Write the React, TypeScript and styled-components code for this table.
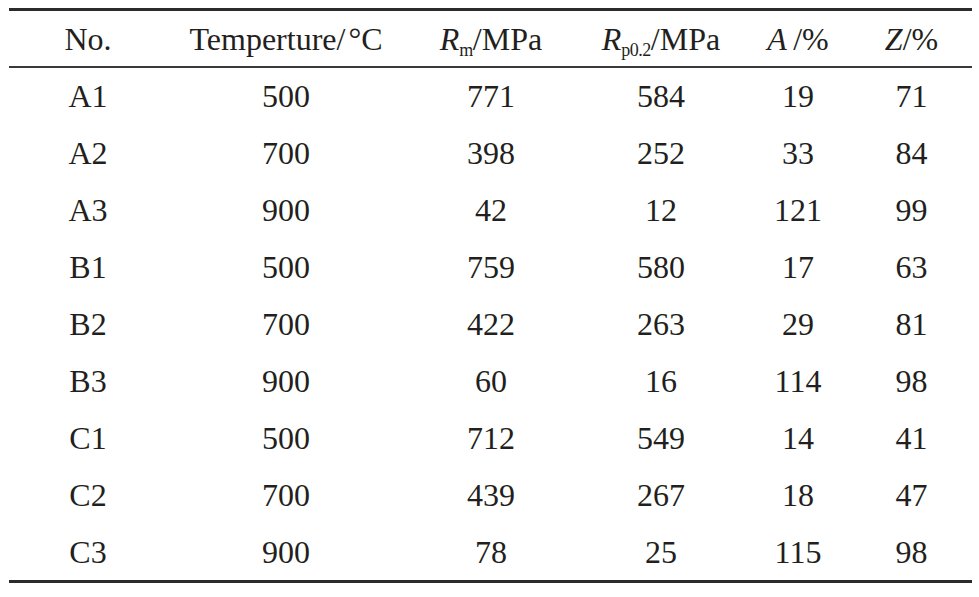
import React from 'react'
import styled, { createGlobalStyle } from 'styled-components'

const GlobalStyle = createGlobalStyle`
  html, body {
    margin: 0;
    padding: 0;
    background: #fff;
  }
  body {
    font-family: "Liberation Serif", "Times New Roman", serif;
    color: #231f20;
  }
`

type Row = [string, string, string, string, string, string]

const rows: Row[] = [
  ['A1', '500', '771', '584', '19', '71'],
  ['A2', '700', '398', '252', '33', '84'],
  ['A3', '900', '42', '12', '121', '99'],
  ['B1', '500', '759', '580', '17', '63'],
  ['B2', '700', '422', '263', '29', '81'],
  ['B3', '900', '60', '16', '114', '98'],
  ['C1', '500', '712', '549', '14', '41'],
  ['C2', '700', '439', '267', '18', '47'],
  ['C3', '900', '78', '25', '115', '98'],
]

const App = () => {
  return (
    <>
      <GlobalStyle />
      <Page>
        <Table>
          <HeadRow>
            <Cell>No.</Cell>
            <Cell>
              Temperture/<Degree>°C</Degree>
            </Cell>
            <Cell>
              <Sym>R</Sym>
              <Sub>m</Sub>/MPa
            </Cell>
            <Cell>
              <Sym>R</Sym>
              <Sub>p0.2</Sub>/MPa
            </Cell>
            <Cell>
              <Sym>A</Sym>&thinsp;/%
            </Cell>
            <Cell>
              <Sym>Z</Sym>/%
            </Cell>
          </HeadRow>
          {rows.map((r) => (
            <BodyRow key={r[0]}>
              {r.map((v, i) => (
                <Cell key={i}>{v}</Cell>
              ))}
            </BodyRow>
          ))}
        </Table>
      </Page>
    </>
  )
}

export default App

const Page = styled.div`
  width: 979px;
  height: 597px;
  padding: 8px 7px 0 9px;
  box-sizing: border-box;
`

const Table = styled.div`
  width: 963px;
  border-top: 3px solid #2b2b2b;
  border-bottom: 3px solid #2b2b2b;
`

const HeadRow = styled.div`
  display: grid;
  grid-template-columns: 158px 238px 172px 168px 106px 121px;
  height: 55px;
  border-bottom: 2px solid #3a3a3a;
  align-items: center;
`

const BodyRow = styled.div`
  display: grid;
  grid-template-columns: 158px 238px 172px 168px 106px 121px;
  height: 56.9px;
  align-items: center;
`

const Cell = styled.div`
  text-align: center;
  font-size: 32px;
  line-height: 1;
  white-space: nowrap;
`

const Sym = styled.span`
  font-style: italic;
`

const Sub = styled.span`
  font-size: 18px;
  position: relative;
  top: 6px;
  letter-spacing: -0.5px;
`

const Degree = styled.span`
  margin-left: 3px;
`
